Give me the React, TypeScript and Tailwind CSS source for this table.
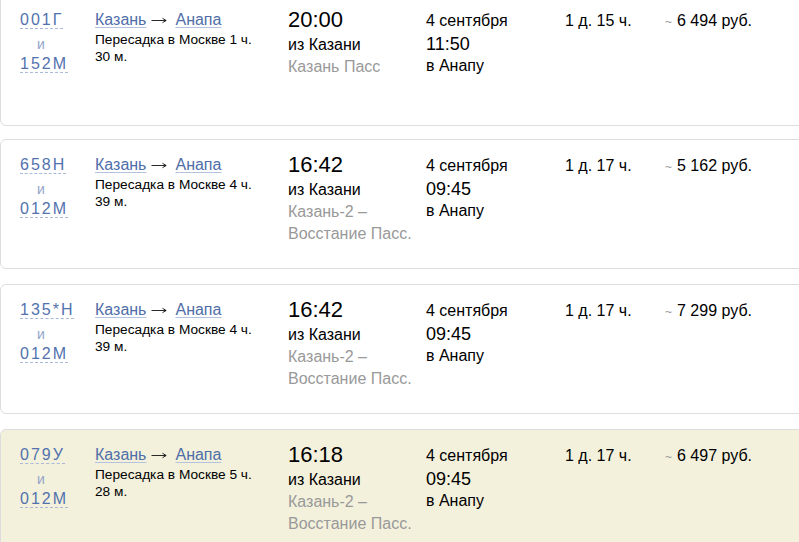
import React from "react";

type Trip = {
  n1: string;
  n2: string;
  transfer: string;
  dep: string;
  station: string;
  arr: string;
  dur: string;
  price: string;
  hl?: boolean;
};

const trips: Trip[] = [
  { n1: "001Г", n2: "152М", transfer: "Пересадка в Москве 1 ч. 30 м.", dep: "20:00", station: "Казань Пасс", arr: "11:50", dur: "1 д. 15 ч.", price: "6 494 руб." },
  { n1: "658Н", n2: "012М", transfer: "Пересадка в Москве 4 ч. 39 м.", dep: "16:42", station: "Казань-2 – Восстание Пасс.", arr: "09:45", dur: "1 д. 17 ч.", price: "5 162 руб." },
  { n1: "135*Н", n2: "012М", transfer: "Пересадка в Москве 4 ч. 39 м.", dep: "16:42", station: "Казань-2 – Восстание Пасс.", arr: "09:45", dur: "1 д. 17 ч.", price: "7 299 руб." },
  { n1: "079У", n2: "012М", transfer: "Пересадка в Москве 5 ч. 28 м.", dep: "16:18", station: "Казань-2 – Восстание Пасс.", arr: "09:45", dur: "1 д. 17 ч.", price: "6 497 руб.", hl: true },
];

function Arrow() {
  return (
    <svg
      width="16"
      height="7"
      viewBox="0 0 16 7"
      className="inline-block align-baseline ml-[5px] mr-[8px] mb-[1px]"
    >
      <path d="M0.5 3.5H15" stroke="#111" strokeWidth="0.9" fill="none" />
      <path d="M11.5 1.3L15.2 3.5L11.5 5.7" stroke="#111" strokeWidth="0.9" fill="none" />
    </svg>
  );
}

function Card({ t, first }: { t: Trip; first: boolean }) {
  return (
    <div
      className={
        "w-[830px] shrink-0 border border-[#dddddd] rounded-[6px] flex pt-[14px] pl-[19px] " +
        (first ? "h-[132px] -mb-[2px] " : "h-[130px] ") +
        (t.hl ? "bg-[#f3f1dc]" : "bg-white")
      }
    >
      <div className="w-[75px] shrink-0 text-[16px] leading-[22px] text-[#5272ae] tracking-[2px]">
        <div>
          <span className="border-b border-dashed border-[#a9b9d8]">{t.n1}</span>
        </div>
        <div className="h-[22px] pl-[17px] pt-[2px] text-[14px] leading-[22px] tracking-normal text-[#93a4c8]">и</div>
        <div>
          <span className="border-b border-dashed border-[#a9b9d8]">{t.n2}</span>
        </div>
      </div>
      <div className="w-[193px] shrink-0">
        <div className="text-[16px] leading-[22px] whitespace-nowrap">
          <span className="text-[#4f6ea8] underline decoration-[#b3c2de] underline-offset-[2px]">Казань</span>
          <Arrow />
          <span className="text-[#4f6ea8] underline decoration-[#b3c2de] underline-offset-[2px]">Анапа</span>
        </div>
        <div className="w-[166px] text-[13.7px] leading-[17px] text-black">{t.transfer}</div>
      </div>
      <div className="w-[138px] shrink-0 -mt-[3px] text-black">
        <div className="text-[22px] leading-[28px]">{t.dep}</div>
        <div className="text-[16px] leading-[22px]">из Казани</div>
        <div className="text-[16px] leading-[22px] text-[#999999]">{t.station}</div>
      </div>
      <div className="w-[139px] shrink-0 text-black">
        <div className="text-[16px] leading-[24px]">4 сентября</div>
        <div className="text-[18px] leading-[22px]">{t.arr}</div>
        <div className="text-[16px] leading-[22px]">в Анапу</div>
      </div>
      <div className="w-[100px] shrink-0 text-[16px] leading-[24px] text-black">{t.dur}</div>
      <div className="shrink-0 text-[16px] leading-[24px] text-black whitespace-nowrap">
        <span className="text-[12px] text-[#999999] mr-[5px]">~</span>
        {t.price}
      </div>
    </div>
  );
}

export default function App() {
  return (
    <div className="w-[799px] h-[542px] overflow-hidden bg-white font-['Liberation_Sans',Arial,sans-serif]">
      <div className="-mt-[6px] flex flex-col gap-[15px]">
        {trips.map((t, i) => (
          <Card key={i} t={t} first={i === 0} />
        ))}
      </div>
    </div>
  );
}
